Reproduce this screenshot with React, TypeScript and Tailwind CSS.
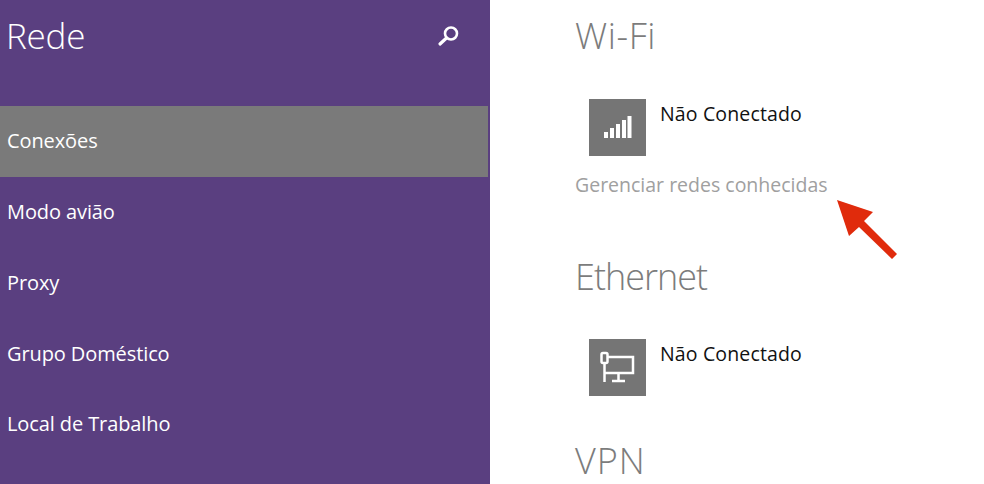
const font = { fontFamily: '"Open Sans", "Noto Sans", sans-serif' };

function NavItem({ label, active }: { label: string; active?: boolean }) {
  return (
    <div className={`flex h-[70.75px] items-center pl-[7px] text-[20px] tracking-[-0.1px] text-white ${active ? "mr-[2px] bg-[#7a7a7a]" : ""}`}>
      {label}
    </div>
  );
}

function Connection({ icon }: { icon: React.ReactNode }) {
  return (
    <div className="ml-[14px] flex">
      <div className="h-[57px] w-[57px] bg-[#757575]">{icon}</div>
      <div className="ml-[14px] mt-[1px] text-[19.5px] leading-[28px] tracking-[0.15px] text-[#111]">Não Conectado</div>
    </div>
  );
}

function Heading({ label, className }: { label: string; className: string }) {
  return <div className={`text-[36px] font-light text-[#7c7c7c] ${className}`}>{label}</div>;
}

export default function App() {
  return (
    <div style={font} className="relative flex h-[484px] w-[984px] overflow-hidden bg-white">
      <aside className="h-full w-[490px] shrink-0 bg-[#5a3f80]">
        <div className="flex h-[106px] items-start justify-between pl-[6px] pr-[28px]">
          <div className="mt-[13px] text-[35px] leading-[46px] font-light tracking-[-0.2px] text-white">Rede</div>
          <svg className="mt-[22px]" width="28" height="28" viewBox="0 0 28 28" fill="none" stroke="white" strokeLinecap="round">
            <circle cx="17" cy="11.5" r="6" strokeWidth="2.6" />
            <path d="M12.5 16 6 22" strokeWidth="3.2" />
          </svg>
        </div>
        <NavItem label="Conexões" active />
        <NavItem label="Modo avião" />
        <NavItem label="Proxy" />
        <NavItem label="Grupo Doméstico" />
        <NavItem label="Local de Trabalho" />
      </aside>
      <main className="pl-[85px]">
        <Heading label="Wi-Fi" className="mt-[14px] mb-[41px] leading-[44px] tracking-[0.6px]" />
        <Connection
          icon={
            <svg width="57" height="57" viewBox="0 0 57 57" fill="white">
              <rect x="15" y="33" width="4" height="6" />
              <rect x="21" y="29" width="4" height="10" />
              <rect x="27" y="25" width="4" height="14" />
              <rect x="33" y="21" width="4" height="18" />
              <rect x="38.5" y="17" width="4" height="22" />
            </svg>
          }
        />
        <div className="mt-[15px] text-[19.5px] leading-[28px] text-[#a0a0a0]">Gerenciar redes conhecidas</div>
        <Heading label="Ethernet" className="mt-[56px] mb-[40px] leading-[44px] tracking-[-1px]" />
        <Connection
          icon={
            <svg width="57" height="57" viewBox="0 0 57 57" fill="none" stroke="white" strokeWidth="2.5">
              <rect x="12.5" y="14" width="6" height="10" rx="1.5" />
              <path d="M15.5 24V43" />
              <path d="M18.5 18H44V34H15.5" />
              <path d="M29.5 34V42M23 42H36" />
            </svg>
          }
        />
        <Heading label="VPN" className="mt-[47px] leading-[36px] tracking-[1px]" />
      </main>
      <svg className="absolute left-[830px] top-[195px]" width="75" height="70" viewBox="0 0 75 70">
        <path d="M7 5 43 17 34 26 67 59 62 64 29 32 19 41Z" fill="#e02b0c" />
      </svg>
    </div>
  );
}
